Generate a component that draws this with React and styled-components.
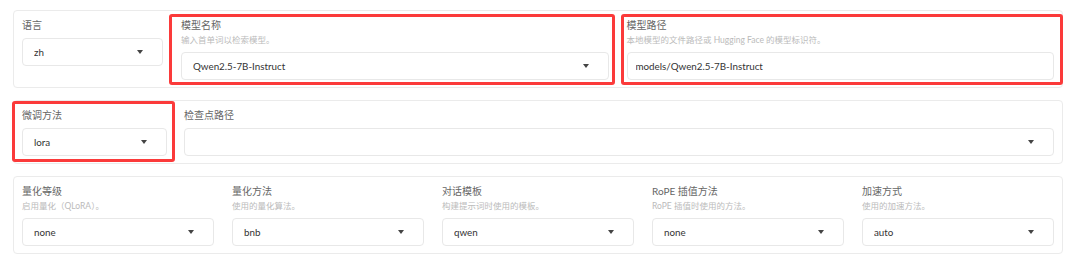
import React from 'react'
import styled, { createGlobalStyle } from 'styled-components'

const Global = createGlobalStyle`
  body {
    margin: 0;
    background: #ffffff;
    font-family: Lato, "Noto Sans CJK SC", sans-serif;
  }
`

const Page = styled.div`
  width: 1080px;
  height: 262px;
  box-sizing: border-box;
  padding: 10px 17px 0 13px;
  display: flex;
  flex-direction: column;
  gap: 12px;
`

const Panel = styled.section`
  display: grid;
  grid-template-columns: ${p => p.cols};
  column-gap: ${p => p.gap || 18}px;
  align-items: start;
  padding: 7px 8px 7px;
  border: 1px solid #ebebeb;
  border-radius: 4px;
  background: #fff;
`

const Field = styled.div`
  position: relative;
  display: flex;
  flex-direction: column;
  min-width: 0;
`

const Label = styled.div`
  font-size: 10px;
  line-height: 14px;
  color: #666;
  margin-bottom: ${p => (p.hasInfo ? 0 : 6)}px;
`

const Info = styled.div`
  font-size: 8.5px;
  line-height: 12px;
  margin: 2px 0 6px;
  color: #bbb;
`

const Box = styled.div`
  height: 28px;
  box-sizing: border-box;
  display: flex;
  align-items: center;
  padding: 0 19px 0 ${p => p.pad || 11}px;
  border: 1px solid #e8e8e8;
  border-radius: 4px;
  background: #fff;
  font-size: 9.8px;
  color: #333;
`

const Value = styled.span`
  flex: 1;
  white-space: nowrap;
  overflow: hidden;
`

const Caret = styled.span`
  width: 0;
  height: 0;
  border-left: 3px solid transparent;
  border-right: 3px solid transparent;
  border-top: 4px solid #444;
`

const Highlight = styled.div`
  position: absolute;
  top: ${p => p.t}px;
  left: ${p => p.l}px;
  right: ${p => p.r}px;
  bottom: ${p => p.b}px;
  border: 3px solid #fb3a3a;
  border-radius: 3px;
  pointer-events: none;
`

const Select = ({ label, info, value, arrow = true, pad, mark }) => (
  <Field>
    <Label hasInfo={!!info}>{label}</Label>
    {info && <Info>{info}</Info>}
    <Box pad={pad}>
      <Value>{value}</Value>
      {arrow && <Caret />}
    </Box>
    {mark && <Highlight {...mark} />}
  </Field>
)

const bottomRow = [
  { label: '量化等级', info: '启用量化（QLoRA）。', value: 'none' },
  { label: '量化方法', info: '使用的量化算法。', value: 'bnb' },
  { label: '对话模板', info: '构建提示词时使用的模板。', value: 'qwen' },
  { label: 'RoPE 插值方法', info: 'RoPE 插值时使用的方法。', value: 'none' },
  { label: '加速方式', info: '使用的加速方法。', value: 'auto' },
]

const App = () => (
  <Page>
    <Global />
    <Panel cols='141px 1fr 1fr'>
      <Select label='语言' value='zh' />
      <Select
        label='模型名称'
        info='输入首单词以检索模型。'
        value='Qwen2.5-7B-Instruct'
        mark={{ t: -4, l: -12, r: -6, b: -5 }}
      />
      <Select
        label='模型路径'
        info='本地模型的文件路径或 Hugging Face 的模型标识符。'
        value='models/Qwen2.5-7B-Instruct'
        arrow={false}
        pad={8}
        mark={{ t: -4, l: -6, r: -9, b: -5 }}
      />
    </Panel>
    <Panel cols='145px 1fr' gap={17}>
      <Select label='微调方法' value='lora' mark={{ t: -7, l: -10, r: -8, b: -6 }} />
      <Select label='检查点路径' value='' />
    </Panel>
    <Panel cols='repeat(5, 1fr)'>
      {bottomRow.map(f => <Select key={f.label} {...f} />)}
    </Panel>
  </Page>
)

export default App
